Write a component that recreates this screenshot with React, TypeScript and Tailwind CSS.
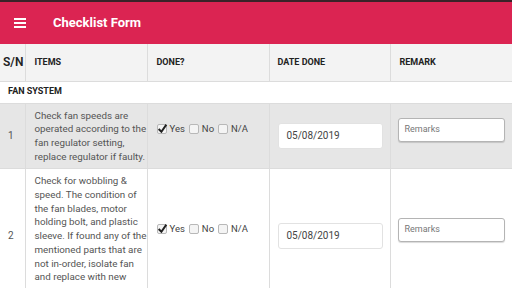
import React from 'react';

type Item = { sn: number; text: string; bg: string };

const items: Item[] = [
	{
		sn: 1,
		text: 'Check fan speeds are operated according to the fan regulator setting, replace regulator if faulty.',
		bg: 'bg-[#e6e6e6]',
	},
	{
		sn: 2,
		text: 'Check for wobbling & speed. The condition of the fan blades, motor holding bolt, and plastic sleeve. If found any of the mentioned parts that are not in-order, isolate fan and replace with new one.',
		bg: 'bg-white',
	},
];

function Box({ checked }: { checked?: boolean }) {
	return (
		<span className="relative inline-block w-[10px] h-[10px] border border-[#b8b8b8] rounded-[2px] bg-[#f4f4f4] shrink-0">
			{checked && (
				<svg viewBox="0 0 10 10" className="absolute -left-px -top-[2px] w-[11px] h-[11px]">
					<path d="M1.5 5.5 L4 8 L8.5 1.5" fill="none" stroke="#222" strokeWidth="1.8" />
				</svg>
			)}
		</span>
	);
}

function Done() {
	return (
		<div className="flex items-center text-[9.5px] text-[#444] -mt-[14px]">
			<Box checked />
			<span className="ml-[3px] mr-[4px]">Yes</span>
			<Box />
			<span className="ml-[3px] mr-[4px]">No</span>
			<Box />
			<span className="ml-[3px]">N/A</span>
		</div>
	);
}

export default function App() {
	return (
		<div className="w-[512px] h-[288px] overflow-hidden bg-white font-['Roboto',sans-serif]">
			<div className="h-[2px] bg-[#3a2228]" />
			<div className="h-[42px] bg-[#db2452] flex items-center">
				<div className="ml-[14px] w-[12px] flex flex-col gap-[2px]">
					<span className="h-[2px] bg-white" />
					<span className="h-[2px] bg-white" />
					<span className="h-[2px] bg-white" />
				</div>
				<span className="ml-[27px] text-white text-[13px] font-bold">Checklist Form</span>
			</div>
			<table className="w-[512px] table-fixed border-collapse text-left">
				<colgroup>
					<col className="w-[25px]" />
					<col className="w-[122px]" />
					<col className="w-[122px]" />
					<col className="w-[121px]" />
					<col className="w-[122px]" />
				</colgroup>
				<thead>
					<tr className="h-[37px] bg-[#f3f3f3] border-b border-[#dcdcdc] text-[#222]">
						<th className="pl-[3px] text-[12px] font-semibold border-r border-[#dcdcdc]">S/N</th>
						<th className="pl-[9px] text-[9px] font-bold border-r border-[#dcdcdc]">ITEMS</th>
						<th className="pl-[9px] text-[9px] font-bold border-r border-[#dcdcdc]">DONE?</th>
						<th className="pl-[8px] text-[9px] font-bold border-r border-[#dcdcdc]">DATE DONE</th>
						<th className="pl-[9px] text-[9px] font-bold">REMARK</th>
					</tr>
				</thead>
				<tbody>
					<tr className="h-[22px] bg-white">
						<td colSpan={5} className="pl-[8px] text-[9px] font-bold text-[#222]">
							FAN SYSTEM
						</td>
					</tr>
					{items.map((it) => (
						<tr key={it.sn} className={`${it.bg} border-t border-[#dcdcdc] align-middle`}>
							<td className="pl-[8px] text-[10px] text-[#555] border-r border-[#dcdcdc]">{it.sn}</td>
							<td className="pl-[9px] pr-0 py-[5px] text-[9.8px] leading-[13.7px] text-[#555] border-r border-[#dcdcdc]">
								{it.text}
							</td>
							<td className="pl-[9px] border-r border-[#dcdcdc]">
								<Done />
							</td>
							<td className="pl-[8px] pr-[8px] border-r border-[#dcdcdc]">
								<div className="h-[26px] w-[105px] bg-white border border-[#e2e2e2] rounded-[3px] flex items-center pl-[8px] text-[10px] text-[#444]">
									05/08/2019
								</div>
							</td>
							<td className="pl-[7px]">
								<div className="-mt-[12px] h-[24px] w-[107px] bg-white border border-[#b4b4b4] rounded-[3px] shadow-[0_1px_1px_rgba(0,0,0,0.15)] flex items-center pl-[6px] text-[9px] text-[#777]">
									Remarks
								</div>
							</td>
						</tr>
					))}
				</tbody>
			</table>
		</div>
	);
}
